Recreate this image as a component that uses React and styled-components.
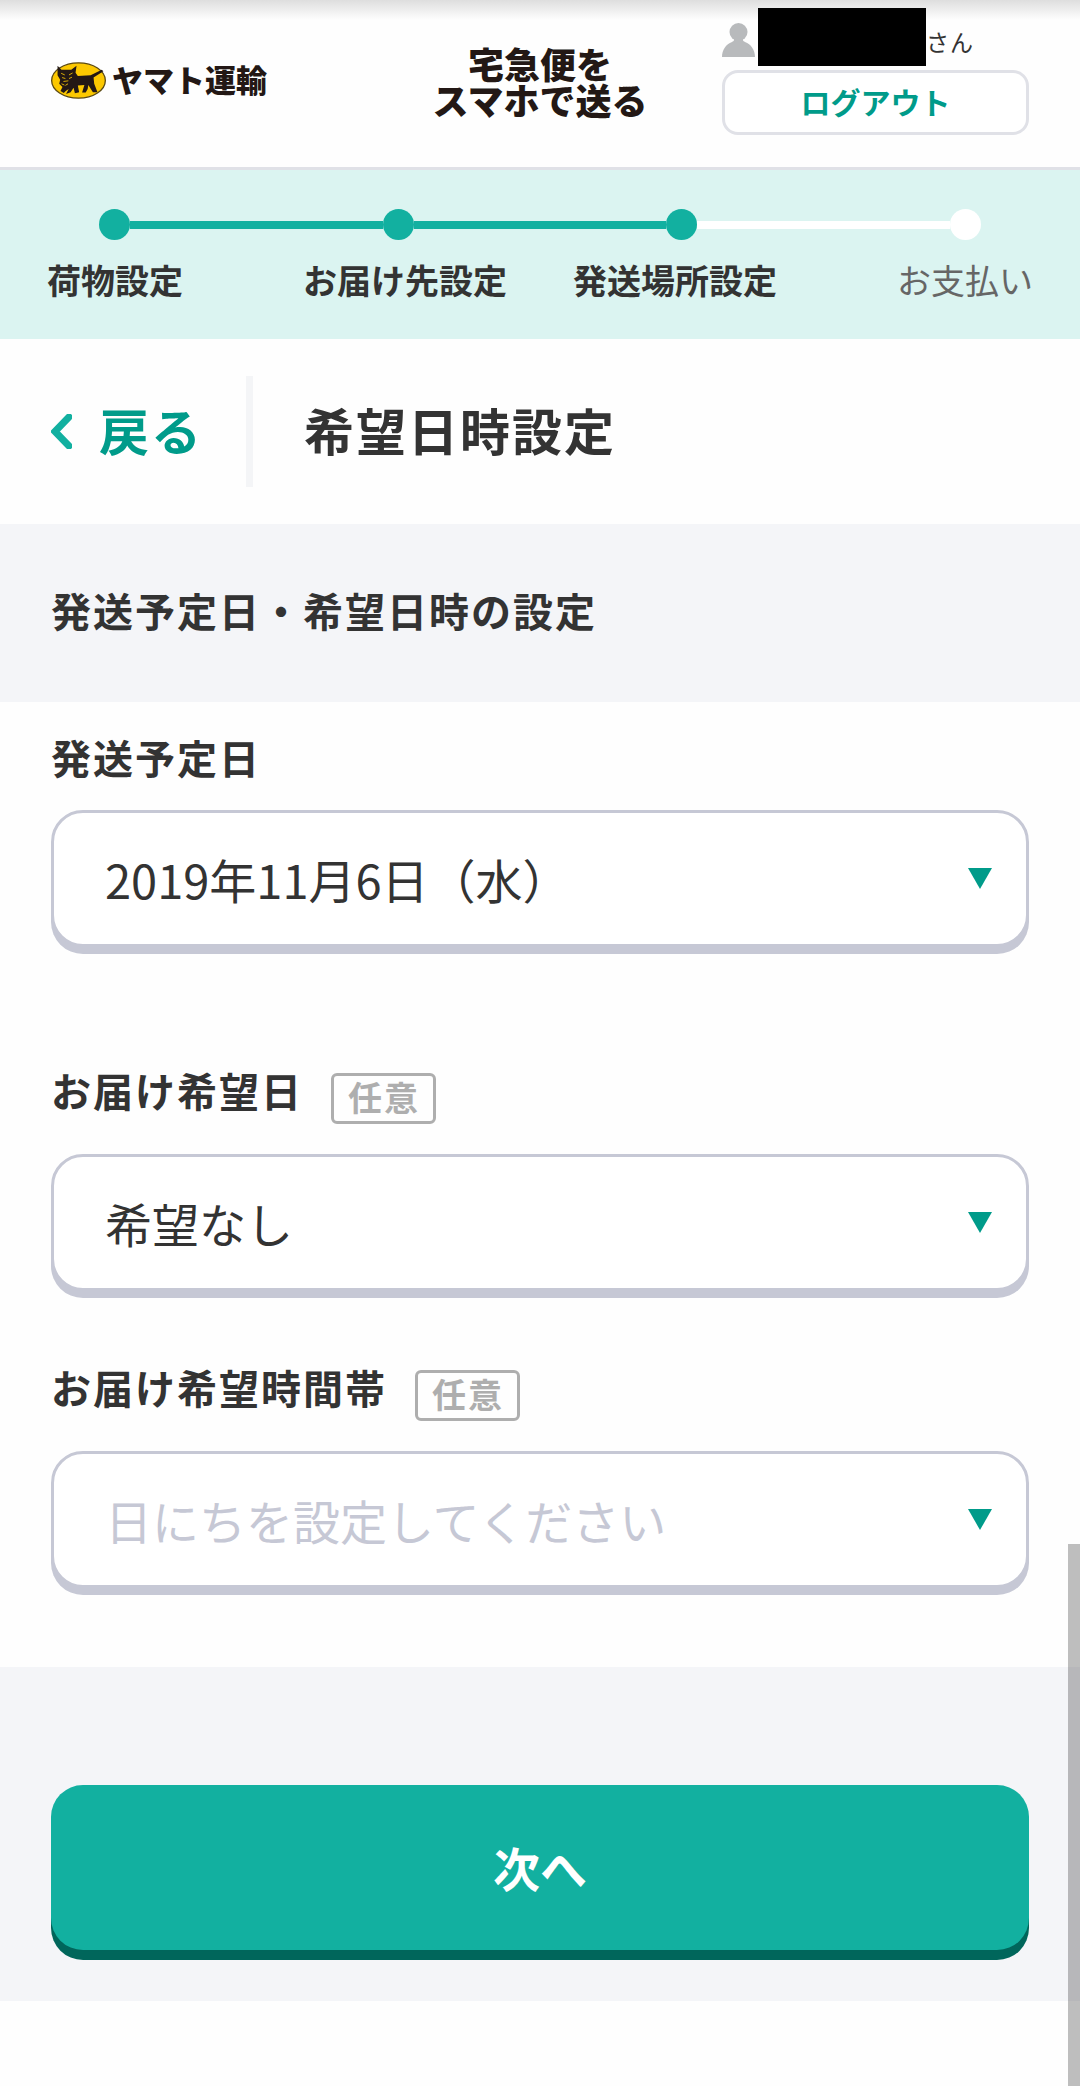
import React, { useState } from 'react'
import styled, { createGlobalStyle } from 'styled-components'

const GlobalStyle = createGlobalStyle`
  *, *::before, *::after {
    box-sizing: border-box;
  }

  body {
    margin: 0;
    background: #fefefe;
    color: #333;
    font-family: "Noto Sans CJK JP", "Noto Sans", sans-serif;
  }

  button, select {
    font-family: inherit;
  }
`

const Page = styled.div`
  min-height: 100vh;
`

const Header = styled.header`
  display: grid;
  grid-template-columns: 1fr auto 1fr;
  align-items: center;
  min-height: 170px;
  padding: 0 51px;
  border-bottom: 3px solid #e0e1e7;
  background: linear-gradient(#dedede, #fefefe 20px);
`

const Brand = styled.a`
  display: flex;
  align-items: center;
  gap: 6px;
  padding-bottom: 6px;
  color: #231815;
  font-size: 31px;
  font-weight: 900;
  line-height: 40px;
  text-decoration: none;
`

const BrandName = styled.span`
  padding-bottom: 4px;
`

const ServiceName = styled.div`
  padding-bottom: 6px;
  color: #231815;
  font-size: 36px;
  font-weight: 900;
  line-height: 36px;
  text-align: center;
`

const Account = styled.div`
  align-self: start;
  justify-self: end;
  width: 307px;
  padding-top: 8px;
`

const UserRow = styled.div`
  display: flex;
  align-items: flex-end;
  margin-bottom: 4px;

  svg {
    margin-bottom: 9px;
  }
`

const UserName = styled.span`
  width: 168px;
  height: 58px;
  margin-left: 3px;
  background: #000;
`

const Honorific = styled.span`
  font-size: 23px;
  line-height: 50px;
  letter-spacing: 1px;
`

const LogoutButton = styled.button`
  display: block;
  width: 100%;
  height: 65px;
  padding: 0 0 3px;
  border: 3px solid #e0e1e7;
  border-radius: 16px;
  background: #fff;
  color: #009b8a;
  font-size: 30px;
  font-weight: 700;
`

const Progress = styled.nav`
  padding: 39px 47px 37px;
  background: #dbf4f1;
`

const Track = styled.div`
  display: flex;
  align-items: center;
  padding: 0 52px;
`

const Dot = styled.span`
  width: 31px;
  height: 31px;
  border-radius: 50%;
  background: ${(props) => (props.$done ? '#12b0a0' : '#fff')};
`

const Line = styled.span`
  flex: 1;
  height: 8px;
  background: ${(props) => (props.$done ? '#12b0a0' : '#fff')};
`

const StepList = styled.ol`
  display: flex;
  justify-content: space-between;
  margin: 17px 0 0;
  padding: 0;
  list-style: none;

  li:nth-child(2) {
    margin-left: 54px;
  }

  li:nth-child(3) {
    margin-right: 54px;
  }
`

const Step = styled.li`
  color: ${(props) => (props.$done ? '#333' : '#666')};
  font-size: 34px;
  font-weight: ${(props) => (props.$done ? 700 : 400)};
  line-height: 45px;
`

const TitleBar = styled.div`
  display: flex;
  align-items: center;
  padding: 37px 51px;
`

const BackLink = styled.a`
  display: flex;
  align-items: center;
  gap: 27px;
  min-height: 111px;
  padding-right: 43px;
  border-right: 7px solid #f4f5f7;
  color: #009b8a;
  font-size: 50px;
  font-weight: 700;
  letter-spacing: 2px;
  text-decoration: none;
`

const BackText = styled.span`
  padding-bottom: 6px;
`

const Title = styled.h1`
  margin: 0;
  padding: 0 0 6px 51px;
  font-size: 50px;
  font-weight: 700;
  letter-spacing: 2px;
`

const SectionTitle = styled.h2`
  margin: 0;
  padding: 56px 51px 62px;
  background: #f4f5f8;
  font-size: 40px;
  font-weight: 700;
  line-height: 60px;
  letter-spacing: 2px;
`

const Fields = styled.div`
  padding: 25px 51px 79px;
`

const Field = styled.div`
  margin-top: ${(props) => props.$gap}px;
`

const LabelRow = styled.div`
  display: flex;
  align-items: flex-start;
  gap: 28px;
  margin-bottom: ${(props) => (props.$optional ? 30 : 23)}px;
`

const Label = styled.label`
  font-size: 40px;
  font-weight: 700;
  line-height: 60px;
  letter-spacing: 2px;
`

const Badge = styled.span`
  margin-top: 13px;
  padding: 0 13px 3px 14px;
  border: 3px solid #aeaeae;
  border-radius: 6px;
  color: #aeaeae;
  font-size: 34px;
  font-weight: 700;
  line-height: 42px;
  letter-spacing: 2px;
`

const SelectBox = styled.div`
  display: grid;
  align-items: center;

  > * {
    grid-area: 1 / 1;
  }

  svg {
    justify-self: end;
    margin-right: 37px;
    pointer-events: none;
  }
`

const Select = styled.select`
  appearance: none;
  width: 100%;
  height: 137px;
  padding: 0 80px 0 51px;
  border: 3px solid #c6c8d5;
  border-radius: 32px;
  background: #fff;
  box-shadow: 0 7px 0 #c6c8d5;
  color: ${(props) => (props.$empty ? '#c6c8d5' : '#333')};
  font-size: 47px;
`

const Actions = styled.div`
  padding: 118px 51px 51px;
  background: #f4f5f8;
`

const NextButton = styled.button`
  display: block;
  width: 100%;
  height: 165px;
  padding: 0 0 3px;
  border: 0;
  border-radius: 32px;
  background: #12b0a0;
  box-shadow: 0 10px 0 #00665b;
  color: #fff;
  font-size: 47px;
  font-weight: 700;
`

const ScrollThumb = styled.div`
  position: fixed;
  right: 0;
  bottom: 0;
  width: 12px;
  height: 26%;
  background: rgba(0, 0, 0, 0.25);
`

const CatMark = () => (
  <svg width="55" height="37" viewBox="0 0 168 112" aria-hidden="true">
    <ellipse cx="84" cy="56" rx="82" ry="54" fill="#fcc800" stroke="#5c4a12" strokeWidth="4" />
    <path
      d="M20 11 L32 23 L62 23 L78 11 L75 32 L82 42 L121 40 L155 23 L160 28 L130 47 L132 66 L142 92 L128 92 L114 70 L112 82 L106 93 L95 93 L102 70 L82 71 L86 92 L73 95 L69 78 L60 92 L46 97 L54 82 L46 87 L39 94 L29 88 L35 76 L25 66 L28 54 L20 40 Z"
      fill="#231815"
    />
    <path
      d="M31 34 l11 5 M66 33 l-11 6 M34 47 l10 3 M64 46 l-9 4 M38 59 l15 -2 M32 66 l9 4 M44 71 l8 -5"
      fill="none"
      stroke="#d9ac06"
      strokeWidth="3"
    />
  </svg>
)

const UserIcon = () => (
  <svg width="33" height="34" viewBox="0 0 33 34" fill="#b8babc" aria-hidden="true">
    <ellipse cx="16.500" cy="9" rx="9" ry="9" />
    <path d="M11 14 H22 C20 17 21 18 23 19 C29 21 33 27 33 34 H0 C0 27 4 21 10 19 C12 18 13 17 11 14 Z" />
  </svg>
)

const Chevron = () => (
  <svg width="21" height="35" viewBox="0 0 21 35" aria-hidden="true">
    <path d="M18 3 L4 17.500 L18 32" fill="none" stroke="#12b0a0" strokeWidth="7" strokeLinecap="round" />
  </svg>
)

const Triangle = () => (
  <svg width="24" height="21" viewBox="0 0 24 21" aria-hidden="true">
    <path d="M0 0 H24 L12 21 Z" fill="#009b8a" />
  </svg>
)

const steps = [
  { name: '荷物設定', done: true },
  { name: 'お届け先設定', done: true },
  { name: '発送場所設定', done: true },
  { name: 'お支払い', done: false },
]

const SelectField = ({ id, label, optional, gap, empty, options }) => {
  const [value, setValue] = useState(options[0])

  return (
    <Field $gap={gap}>
      <LabelRow $optional={optional}>
        <Label htmlFor={id}>{label}</Label>
        {optional ? <Badge>任意</Badge> : null}
      </LabelRow>
      <SelectBox>
        <Select id={id} value={value} $empty={empty} onChange={(e) => setValue(e.target.value)}>
          {options.map((option) => (
            <option key={option} value={option}>{option}</option>
          ))}
        </Select>
        <Triangle />
      </SelectBox>
    </Field>
  )
}

const App = () => (
  <Page>
    <GlobalStyle />

    <Header>
      <Brand href="#">
        <CatMark />
        <BrandName>ヤマト運輸</BrandName>
      </Brand>
      <ServiceName>
        宅急便を
        <br />
        スマホで送る
      </ServiceName>
      <Account>
        <UserRow>
          <UserIcon />
          <UserName />
          <Honorific>さん</Honorific>
        </UserRow>
        <LogoutButton type="button">ログアウト</LogoutButton>
      </Account>
    </Header>

    <Progress>
      <Track>
        {steps.map((step, i) => (
          <React.Fragment key={step.name}>
            {i > 0 ? <Line $done={step.done} /> : null}
            <Dot $done={step.done} />
          </React.Fragment>
        ))}
      </Track>
      <StepList>
        {steps.map((step) => (
          <Step key={step.name} $done={step.done}>{step.name}</Step>
        ))}
      </StepList>
    </Progress>

    <TitleBar>
      <BackLink href="#">
        <Chevron />
        <BackText>戻る</BackText>
      </BackLink>
      <Title>希望日時設定</Title>
    </TitleBar>

    <SectionTitle>発送予定日・希望日時の設定</SectionTitle>

    <form onSubmit={(e) => e.preventDefault()}>
      <Fields>
        <SelectField id="ship-date" label="発送予定日" gap={0} options={['2019年11月6日（水）']} />
        <SelectField id="delivery-date" label="お届け希望日" optional gap={113} options={['希望なし']} />
        <SelectField
          id="delivery-time"
          label="お届け希望時間帯"
          optional
          empty
          gap={66}
          options={['日にちを設定してください']}
        />
      </Fields>
      <Actions>
        <NextButton type="submit">次へ</NextButton>
      </Actions>
    </form>

    <ScrollThumb />
  </Page>
)

export default App
